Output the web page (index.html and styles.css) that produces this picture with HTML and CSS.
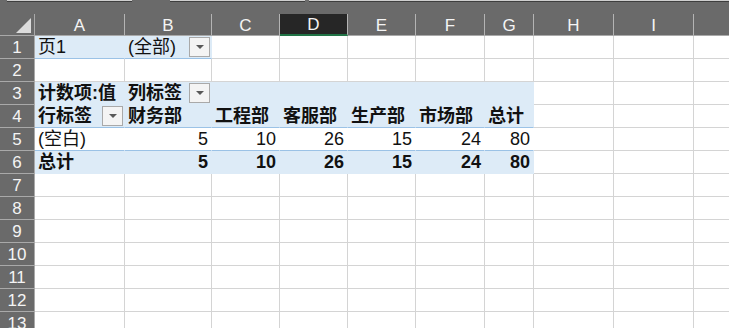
FILE: index.html
```html
<!DOCTYPE html>
<html lang="zh-CN">
<head>
<meta charset="UTF-8" />
<meta name="viewport" content="width=device-width, initial-scale=1" />
<title>数据透视表</title>
<link rel="stylesheet" href="styles.css">
</head>
<body>

<div class="topbar">
  <span class="box box-name"></span>
  <span class="box box-mid"></span>
  <span class="box box-formula"></span>
</div>

<div class="sheet" id="sheet"></div>

<script>
  const cols = ["A", "B", "C", "D", "E", "F", "G", "H", "I", "J"];
  const rowCount = 13;

  // pivot table cells: text + classes
  const cells = {
    A1: {text: "页1", cls: "pv line"},
    B1: {text: "(全部)", cls: "pv line", btn: true},
    A3: {text: "计数项:值", cls: "pv bold"},
    B3: {text: "列标签", cls: "pv bold", btn: true},
    C3: {cls: "pv"}, D3: {cls: "pv"}, E3: {cls: "pv"}, F3: {cls: "pv"}, G3: {cls: "pv"},
    A4: {text: "行标签", cls: "pv bold line", btn: true},
    B4: {text: "财务部", cls: "pv bold line"},
    C4: {text: "工程部", cls: "pv bold line"},
    D4: {text: "客服部", cls: "pv bold line"},
    E4: {text: "生产部", cls: "pv bold line"},
    F4: {text: "市场部", cls: "pv bold line"},
    G4: {text: "总计", cls: "pv bold line"},
    A5: {text: "(空白)", cls: "plain line"},
    B5: {text: "5", cls: "plain line num"},
    C5: {text: "10", cls: "plain line num"},
    D5: {text: "26", cls: "plain line num"},
    E5: {text: "15", cls: "plain line num"},
    F5: {text: "24", cls: "plain line num"},
    G5: {text: "80", cls: "plain line num"},
    A6: {text: "总计", cls: "pv bold"},
    B6: {text: "5", cls: "pv bold num"},
    C6: {text: "10", cls: "pv bold num"},
    D6: {text: "26", cls: "pv bold num"},
    E6: {text: "15", cls: "pv bold num"},
    F6: {text: "24", cls: "pv bold num"},
    G6: {text: "80", cls: "pv bold num"},
  };

  const sheet = document.getElementById("sheet");

  function add(cls, text) {
    const el = document.createElement("div");
    el.className = cls;
    if (text) {
      const span = document.createElement("span");
      span.textContent = text;
      el.appendChild(span);
    }
    sheet.appendChild(el);
    return el;
  }

  // column headers
  const corner = add("corner");
  corner.innerHTML = '<svg width="15" height="15" viewBox="0 0 15 15"><polygon points="15,0 15,15 0,15" fill="#dcdcdc"/></svg>';
  cols.forEach(c => add(c === "D" ? "colhead active" : "colhead", c));

  // rows
  for (let r = 1; r <= rowCount; r++) {
    add("rowhead", String(r));
    cols.forEach(c => {
      const info = cells[c + r];
      const el = add("cell " + (info ? info.cls : ""), info ? info.text : "");
      if (info && info.btn) {
        const b = document.createElement("span");
        b.className = "dd";
        el.appendChild(b);
      }
    });
  }
</script>

</body>
</html>
```

FILE: styles.css
```css
body {
  margin: 0;
  background: #fff;
  overflow: hidden;
  font-family: "Liberation Sans", "Noto Sans CJK SC", sans-serif;
}

.topbar {
  height: 14px;
  background: #6a6a6a;
  display: flex;
  align-items: flex-start;
}
.box {
  height: 1px;
  background: #cfcfcf;
  border-bottom: 1px solid #3e3e3e;
}
.box-name { width: 125px; margin-left: 7px; }
.box-mid { width: 135px; margin-left: 38px; }
.box-formula { flex: 1; margin-left: 4px; }

.sheet {
  display: grid;
  grid-template-columns: 35px 90px 87px 68px 68px 68px 69px 49px 80px 80px 100px;
  grid-template-rows: 22px;
  grid-auto-rows: 23px;
  overflow: hidden;
}

.corner {
  background: #6a6a6a;
  border-right: 1px solid #a9a9a9;
  border-bottom: 1px solid #a9a9a9;
  display: flex;
  justify-content: flex-end;
  align-items: flex-end;
  padding: 0 3px 2px 0;
  box-sizing: border-box;
}

.colhead {
  background: #6a6a6a;
  color: #f4f4f4;
  font-size: 17px;
  border-right: 1px solid #b4b4b4;
  border-bottom: 1px solid #a9a9a9;
  display: flex;
  align-items: center;
  justify-content: center;
  padding-top: 2px;
  box-sizing: border-box;
}
.colhead.active {
  background: #262626;
  border-bottom: 2px solid #217346;
}

.rowhead {
  background: #6a6a6a;
  color: #f4f4f4;
  font-size: 17px;
  border-right: 1px solid #a9a9a9;
  border-bottom: 1px solid #a9a9a9;
  display: flex;
  align-items: center;
  justify-content: center;
  padding-top: 1px;
  box-sizing: border-box;
}

.cell {
  font-size: 18px;
  line-height: 22px;
  color: #111;
  border-right: 1px solid #d4d4d4;
  border-bottom: 1px solid #d4d4d4;
  display: flex;
  align-items: flex-end;
  padding: 0 3px;
  white-space: nowrap;
  box-sizing: border-box;
}

.cell.pv {
  background: #ddebf7;
  border-color: transparent;
}
.cell.plain {
  border-color: transparent;
}
.cell.line {
  border-bottom-color: #9bc2e6;
}
.cell.bold { font-weight: 700; }
.cell.num { justify-content: flex-end; }

.dd {
  margin-left: auto;
  margin-right: -2px;
  align-self: center;
  width: 19px;
  height: 18px;
  border: 1px solid #a9a9a9;
  background: #f4f4f4;
  display: flex;
  align-items: center;
  justify-content: center;
}
.dd::after {
  content: "";
  border-left: 4px solid transparent;
  border-right: 4px solid transparent;
  border-top: 4px solid #595959;
}
```
